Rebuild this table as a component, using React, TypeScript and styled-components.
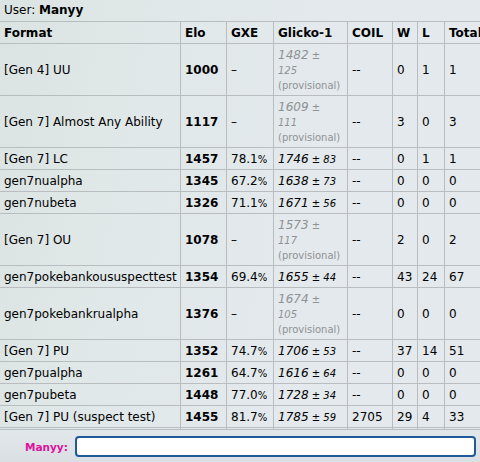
import React from "react";
import styled, { createGlobalStyle } from "styled-components";

const Global = createGlobalStyle`
  html, body { margin: 0; padding: 0; }
  body {
    font-family: "DejaVu Sans", Verdana, sans-serif;
    font-size: 12px;
    color: #000;
  }
  #root { height: 462px; }
`;

const Room = styled.div`
  width: 480px;
  height: 462px;
  display: flex;
  flex-direction: column;
  overflow: hidden;
  background: linear-gradient(100deg, #dbe4e2 0%, #e1e8e9 30%, #e3e9ec 60%, #e4e9ed 100%);
`;

const Log = styled.div`
  flex: 1;
  overflow: hidden;
  padding-top: 3px;
`;

const UserLine = styled.div`
  line-height: 15px;
  padding-left: 4px;
`;

const Table = styled.table`
  margin: 3px 0 0 -1px;
  border-spacing: 0;
  table-layout: fixed;
  width: 497px;
  line-height: 15px;
`;

const Cell = styled.td<{ $w?: number; $h?: number; $first?: boolean; $top?: boolean }>`
  box-sizing: border-box;
  ${(p) => (p.$w ? `width: ${p.$w}px;` : "")}
  ${(p) => (p.$h ? `height: ${p.$h}px;` : "")}
  padding: 1px 4px 0;
  vertical-align: middle;
  text-align: left;
  border-right: 1px solid #b9bdbf;
  border-bottom: 1px solid #b9bdbf;
  ${(p) => (p.$first ? "border-left: 1px solid #b9bdbf;" : "")}
  ${(p) => (p.$top ? "border-top: 1px solid #b9bdbf;" : "")}
  white-space: nowrap;
`;

const Head = styled(Cell).attrs({ as: "th" })`
  font-weight: bold;
`;

const Small = styled.small`
  font-size: 10px;
  line-height: 10px;
`;

const Rating = styled.em<{ $prov?: boolean }>`
  font-style: italic;
  color: ${(p) => (p.$prov ? "#8f9294" : "#000")};
`;

const ProvNote = styled.small`
  font-size: 10px;
  line-height: 10px;
  color: #8f9294;
`;

const Bar = styled.div`
  height: 33px;
  flex: none;
  box-sizing: border-box;
  border-top: 1px solid #b7bec3;
  background: linear-gradient(#e2e7ea, #d9dfe3);
  display: flex;
  align-items: center;
  padding: 0 4px 0 25px;
  gap: 7px;
`;

const Label = styled.label`
  font-weight: bold;
  font-size: 10.5px;
  color: #de129d;
  padding-top: 1px;
`;

const Input = styled.input`
  flex: 1;
  height: 21px;
  box-sizing: border-box;
  border: 2px solid #215a98;
  border-radius: 4px;
  background: #fff;
  outline: none;
  padding: 0 2px;
  font-family: "DejaVu Sans", Verdana, sans-serif;
  font-size: 12px;
  margin-top: 1px;
`;

type Row = {
  format: string;
  elo: number;
  gxe?: string;
  r: number;
  rd: number;
  coil?: string;
  w: number;
  l: number;
  prov?: boolean;
};

const rows: Row[] = [
  { format: "[Gen 4] UU", elo: 1000, r: 1482, rd: 125, w: 0, l: 1, prov: true },
  { format: "[Gen 7] Almost Any Ability", elo: 1117, r: 1609, rd: 111, w: 3, l: 0, prov: true },
  { format: "[Gen 7] LC", elo: 1457, gxe: "78.1", r: 1746, rd: 83, w: 0, l: 1 },
  { format: "gen7nualpha", elo: 1345, gxe: "67.2", r: 1638, rd: 73, w: 0, l: 0 },
  { format: "gen7nubeta", elo: 1326, gxe: "71.1", r: 1671, rd: 56, w: 0, l: 0 },
  { format: "[Gen 7] OU", elo: 1078, r: 1573, rd: 117, w: 2, l: 0, prov: true },
  { format: "gen7pokebankoususpecttest", elo: 1354, gxe: "69.4", r: 1655, rd: 44, w: 43, l: 24 },
  { format: "gen7pokebankrualpha", elo: 1376, r: 1674, rd: 105, w: 0, l: 0, prov: true },
  { format: "[Gen 7] PU", elo: 1352, gxe: "74.7", r: 1706, rd: 53, w: 37, l: 14 },
  { format: "gen7pualpha", elo: 1261, gxe: "64.7", r: 1616, rd: 64, w: 0, l: 0 },
  { format: "gen7pubeta", elo: 1448, gxe: "77.0", r: 1728, rd: 34, w: 0, l: 0 },
  { format: "[Gen 7] PU (suspect test)", elo: 1455, gxe: "81.7", r: 1785, rd: 59, coil: "2705", w: 29, l: 4 },
  { format: "[Gen 7] Random Battle", elo: 1290, gxe: "62.3", r: 1601, rd: 48, w: 12, l: 9 },
];

const widths = [182, 46, 47, 74, 45, 25, 27, 51];
const headers = ["Format", "Elo", "GXE", "Glicko-1", "COIL", "W", "L", "Total"];

export default function App() {
  return (
    <>
      <Global />
      <Room>
        <Log>
          <UserLine>
            User: <strong>Manyy</strong>
          </UserLine>
          <Table>
            <thead>
              <tr>
                {headers.map((h, i) => (
                  <Head key={h} $w={widths[i]} $h={23} $first={i === 0} $top>
                    {h}
                  </Head>
                ))}
              </tr>
            </thead>
            <tbody>
              {rows.map((r) => {
                const h = r.prov ? 52 : 22;
                return (
                  <tr key={r.format}>
                    <Cell $first $h={h}>{r.format}</Cell>
                    <Cell $h={h}>
                      <strong>{r.elo}</strong>
                    </Cell>
                    <Cell $h={h}>
                      {r.gxe ? (
                        <>
                          {r.gxe}
                          <Small>%</Small>
                        </>
                      ) : (
                        "–"
                      )}
                    </Cell>
                    <Cell $h={h}>
                      {r.prov ? (
                        <>
                          <Rating $prov>
                            {r.r}
                            <Small> ±</Small>
                            <br />
                            <Small>{r.rd}</Small>
                          </Rating>
                          <br />
                          <ProvNote>(provisional)</ProvNote>
                        </>
                      ) : (
                        <Rating>
                          {r.r}
                          <Small> ± {r.rd}</Small>
                        </Rating>
                      )}
                    </Cell>
                    <Cell $h={h}>{r.coil ?? "--"}</Cell>
                    <Cell $h={h}>{r.w}</Cell>
                    <Cell $h={h}>{r.l}</Cell>
                    <Cell $h={h}>{r.w + r.l}</Cell>
                  </tr>
                );
              })}
            </tbody>
          </Table>
        </Log>
        <Bar>
          <Label>Manyy:</Label>
          <Input autoFocus aria-label="message" />
        </Bar>
      </Room>
    </>
  );
}
